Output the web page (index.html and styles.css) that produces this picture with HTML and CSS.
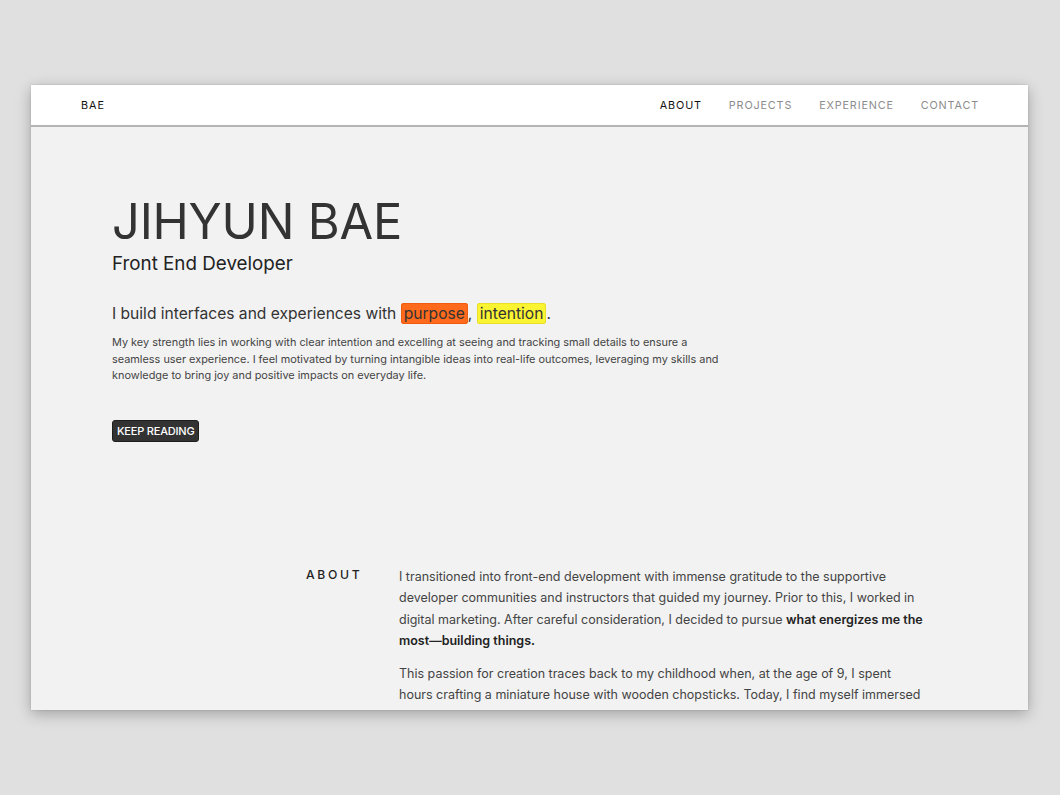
FILE: index.html
```html
<!DOCTYPE html>
<html lang="en">
<head>
<meta charset="utf-8">
<title>Jihyun Bae</title>
<link rel="stylesheet" href="styles.css">
</head>
<body>
<div class="window">
  <header class="nav">
    <a class="logo" href="#">BAE</a>
    <nav class="links">
      <a class="link active" href="#">ABOUT</a>
      <a class="link" href="#">PROJECTS</a>
      <a class="link" href="#">EXPERIENCE</a>
      <a class="link" href="#">CONTACT</a>
    </nav>
  </header>
  <main class="content">
    <section class="hero">
      <h1 class="name">JIHYUN BAE</h1>
      <h2 class="role">Front End Developer</h2>
      <p class="tagline">I build interfaces and experiences with <span class="hl hl-orange">purpose</span>, <span class="hl hl-yellow">intention</span>.</p>
      <p class="intro">My key strength lies in working with clear intention and excelling at seeing and tracking small details to ensure a seamless user experience. I feel motivated by turning intangible ideas into real-life outcomes, leveraging my skills and knowledge to bring joy and positive impacts on everyday life.</p>
      <a class="btn" href="#">KEEP READING</a>
    </section>
    <section class="about">
      <h3 class="about-label">ABOUT</h3>
      <div class="about-text">
        <p>I transitioned into front-end development with immense gratitude to the supportive developer communities and instructors that guided my journey. Prior to this, I worked in digital marketing. After careful consideration, I decided to pursue <strong>what energizes me the most—building things.</strong></p>
        <p>This passion for creation traces back to my childhood when, at the age of 9, I spent hours crafting a miniature house with wooden chopsticks. Today, I find myself immersed in building web experiences that bring ideas to life.</p>
      </div>
    </section>
  </main>
</div>
</body>
</html>
```
FILE: styles.css
```css
* { box-sizing: border-box; }
html, body { margin: 0; padding: 0; }
body {
  background: #e0e0e0;
  font-family: Inter, "Noto Sans", sans-serif;
  color: #333;
  height: 795px;
  overflow: hidden;
  padding-top: 85px;
}
.window {
  width: 997px;
  height: 625px;
  margin-left: 31px;
  background: #f2f2f2;
  overflow: hidden;
  box-shadow: 0 4px 14px rgba(0,0,0,0.28), 0 0 2px rgba(0,0,0,0.15);
}
.nav {
  height: 42px;
  background: #fff;
  border-bottom: 2px solid #b4b4b4;
  display: flex;
  align-items: center;
  justify-content: space-between;
  padding: 1px 49px 0 50px;
}
.logo {
  font-size: 10.8px;
  letter-spacing: 1px;
  color: #111;
  text-decoration: none;
}
.links { display: flex; gap: 27px; }
.link {
  font-size: 10.8px;
  letter-spacing: 0.85px;
  color: #8c8c8c;
  text-decoration: none;
}
.link.active { color: #111; }
.content { padding: 0; }
.hero {
  padding: 68px 0 0 81px;
  height: 439px;
}
.name {
  margin: 0;
  font-size: 48.8px;
  font-weight: 400;
  line-height: 54px;
  color: #333;
  letter-spacing: -0.2px;
}
.role {
  margin: 3px 0 0;
  font-size: 18.8px;
  font-weight: 400;
  line-height: 24px;
  color: #222;
}
.tagline {
  margin: 27px 0 0;
  font-size: 15.6px;
  line-height: 22px;
  color: #333;
}
.hl {
  padding: 1px 3px;
  border-radius: 3px;
}
.hl-orange { background: #ff6a1c; box-shadow: inset 0 0 0 1px #f05d10; }
.hl-yellow { background: #fbf433; box-shadow: inset 0 0 0 1px #e8df2a; }
.intro {
  margin: 9px 0 0;
  width: 615px;
  font-size: 10.9px;
  line-height: 16.7px;
  color: #444;
}
.btn {
  display: inline-block;
  margin-top: 36px;
  padding: 3px 4px;
  background: #333;
  border: 1px solid #1e1e1e;
  border-radius: 3px;
  color: #fff;
  font-size: 11px;
  font-weight: 500;
  line-height: 14px;
  letter-spacing: -0.2px;
  text-decoration: none;
}
.about {
  display: flex;
  padding-left: 275px;
}
.about-label {
  margin: 0;
  width: 93px;
  font-size: 12.2px;
  font-weight: 500;
  letter-spacing: 2.7px;
  line-height: 18px;
  color: #222;
}
.about-text { width: 526px; }
.about-text p {
  margin: 0 0 12px;
  font-size: 12.5px;
  line-height: 21.3px;
  color: #444;
}
.about-text strong { color: #222; font-weight: 600; }
```
